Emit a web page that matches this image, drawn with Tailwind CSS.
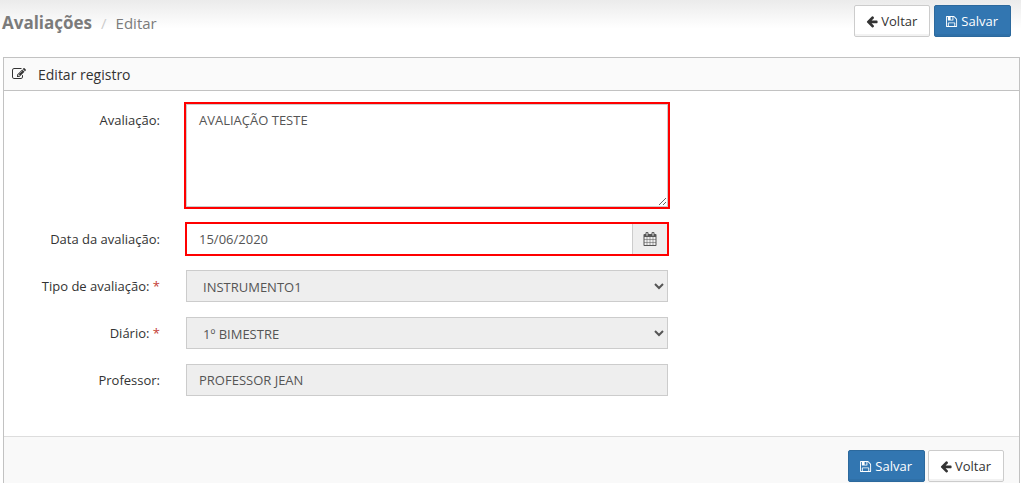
<!DOCTYPE html>
<html lang="pt-BR">
<head>
    <meta charset="UTF-8">
    <meta name="viewport" content="width=device-width, initial-scale=1.0">
    <title>Avaliações - Editar</title>
    <script src="https://cdn.jsdelivr.net/npm/@tailwindcss/browser@4"></script>
</head>
<body class="bg-white font-['Open_Sans',sans-serif] text-[13px] leading-5 text-[#333] overflow-hidden">
    <!-- Icons -->
    <svg class="hidden">
        <symbol id="icon-arrow-left" viewBox="128 0 1536 1792"><path d="M1664 896v128q0 53-32.5 90.5t-84.5 37.5h-704l293 294q38 36 38 90t-38 90l-75 76q-37 37-90 37-52 0-91-37l-651-652q-37-37-37-90 0-52 37-91l651-650q38-38 91-38 52 0 90 38l75 74q38 38 38 91t-38 91l-293 293h704q52 0 84.5 37.5t32.5 90.5z"/></symbol>
        <symbol id="icon-save" viewBox="128 0 1664 1792"><path d="M512 1536h768v-384h-768v384zm896 0h128v-896q0-14-10-38.5t-20-34.5l-281-281q-10-10-34-20t-39-10v416q0 40-28 68t-68 28h-576q-40 0-68-28t-28-68v-416h-128v1280h128v-416q0-40 28-68t68-28h832q40 0 68 28t28 68v416zm-384-928v-320q0-13-9.5-22.5t-22.5-9.5h-192q-13 0-22.5 9.5t-9.5 22.5v320q0 13 9.5 22.5t22.5 9.5h192q13 0 22.5-9.5t9.5-22.5zm640 32v928q0 40-28 68t-68 28h-1344q-40 0-68-28t-28-68v-1344q0-40 28-68t68-28h928q40 0 88 20t76 48l280 280q28 28 48 76t20 88z"/></symbol>
        <symbol id="icon-edit" viewBox="0 0 1792 1792"><path d="M888 1184l116-116-152-152-116 116v56h96v96h56zm440-720q-16-16-33 1l-350 350q-17 17-1 33t33-1l350-350q17-17 1-33zm80 594v190q0 119-84.5 203.5t-203.5 84.5h-832q-119 0-203.5-84.5t-84.5-203.5v-832q0-119 84.5-203.5t203.5-84.5h832q63 0 117 25 15 7 18 23 3 17-9 29l-49 49q-14 14-32 8-23-6-45-6h-832q-66 0-113 47t-47 113v832q0 66 47 113t113 47h832q66 0 113-47t47-113v-126q0-13 9-22l64-64q15-15 35-7t20 29zm-96-738l288 288-672 672h-288v-288zm444 132l-92 92-288-288 92-92q28-28 68-28t68 28l152 152q28 28 28 68t-28 68z"/></symbol>
        <symbol id="icon-calendar" viewBox="0 0 1792 1792"><path d="M192 1664h288v-288h-288v288zm352 0h320v-288h-320v288zm-352-352h288v-320h-288v320zm352 0h320v-320h-320v320zm-352-384h288v-288h-288v288zm736 736h320v-288h-320v288zm-384-736h320v-288h-320v288zm768 736h288v-288h-288v288zm-384-352h320v-320h-320v320zm-352-864v-288q0-13-9.5-22.5t-22.5-9.5h-64q-13 0-22.5 9.5t-9.5 22.5v288q0 13 9.5 22.5t22.5 9.5h64q13 0 22.5-9.5t9.5-22.5zm736 864h288v-320h-288v320zm-384-384h320v-288h-320v288zm384 0h288v-288h-288v288zm32-480v-288q0-13-9.5-22.5t-22.5-9.5h-64q-13 0-22.5 9.5t-9.5 22.5v288q0 13 9.5 22.5t22.5 9.5h64q13 0 22.5-9.5t9.5-22.5zm384-64v1280q0 52-38 90t-90 38h-1408q-52 0-90-38t-38-90v-1280q0-52 38-90t90-38h128v-96q0-66 47-113t113-47h64q66 0 113 47t47 113v96h384v-96q0-66 47-113t113-47h64q66 0 113 47t47 113v96h128q52 0 90 38t38 90z"/></symbol>
    </svg>

    <!-- Page header -->
    <header class="flex items-start justify-between bg-linear-to-b from-[#ebebeb] to-white to-50% h-[57px] pt-[5px] pl-0.5 pr-2.5">
        <h1 class="flex items-center pt-1 text-[#7b7b7b]">
            <span class="text-[17px] leading-7 font-bold">Avaliações</span>
            <span class="px-[9px] text-[15px] text-[#ccc]">/</span>
            <span class="text-[15px]">Editar</span>
        </h1>
        <div class="flex gap-1">
            <button type="button" class="flex items-center gap-[3px] h-8 pl-[11px] pr-3 rounded-xs border border-[#ccc] bg-white shadow-[inset_0_-2px_0_rgba(0,0,0,0.05)] hover:bg-gray-100">
                <svg class="w-3 h-[13px]" fill="currentColor"><use href="#icon-arrow-left"/></svg>
                Voltar
            </button>
            <button type="submit" form="edit-form" class="flex items-center gap-[3px] h-8 pl-[11px] pr-3 rounded-xs border border-[#2c699d] bg-[#3276b1] text-white shadow-[inset_0_-2px_0_rgba(0,0,0,0.05)] hover:bg-[#2a6395]">
                <svg class="w-3 h-[13px]" fill="currentColor"><use href="#icon-save"/></svg>
                Salvar
            </button>
        </div>
    </header>

    <!-- Form panel -->
    <form id="edit-form" class="ml-[3px] mr-px border border-[#c2c2c2]">
        <div class="flex items-center gap-3 h-[33px] pl-2 border-b border-[#c2c2c2] bg-[#fafafa]">
            <svg class="size-[14px]" fill="currentColor"><use href="#icon-edit"/></svg>
            <h2 class="pt-px text-sm">Editar registro</h2>
        </div>

        <div class="flex flex-col gap-[15px] pt-[13px] pb-10">
            <div class="grid grid-cols-[156px_482fr_325fr] gap-x-[26px] pb-px">
                <label for="avaliacao" class="pt-1.5 text-right">Avaliação:</label>
                <textarea id="avaliacao" class="block h-[103px] px-3 py-[5px] border border-[#ccc] outline-2 outline-[#f00] text-[#555] resize">AVALIAÇÃO TESTE</textarea>
            </div>
            <div class="grid grid-cols-[156px_482fr_325fr] gap-x-[26px]">
                <label for="data" class="pt-1.5 text-right">Data da avaliação:</label>
                <div class="flex h-8 border border-[#ccc] outline-2 -outline-offset-1 outline-[#f00]">
                    <input id="data" type="text" value="15/06/2020" class="grow min-w-0 px-3 text-[#555] outline-none">
                    <button type="button" aria-label="Abrir calendário" class="flex items-center justify-center w-[35px] border-l border-[#ccc] bg-[#eee] text-[#555]">
                        <svg class="size-[14px]" fill="currentColor"><use href="#icon-calendar"/></svg>
                    </button>
                </div>
            </div>
            <div class="grid grid-cols-[156px_482fr_325fr] gap-x-[26px]">
                <label for="tipo" class="pt-1.5 text-right">Tipo de avaliação: <span class="text-[#c43c35]">*</span></label>
                <select id="tipo" disabled class="h-8 px-3 pt-0.5 border border-[#ccc] bg-[#eee] text-[#555] opacity-100">
                    <option>INSTRUMENTO1</option>
                </select>
            </div>
            <div class="grid grid-cols-[156px_482fr_325fr] gap-x-[26px]">
                <label for="diario" class="pt-1.5 text-right">Diário: <span class="text-[#c43c35]">*</span></label>
                <select id="diario" disabled class="h-8 px-3 pt-0.5 border border-[#ccc] bg-[#eee] text-[#555] opacity-100">
                    <option>1º BIMESTRE</option>
                </select>
            </div>
            <div class="grid grid-cols-[156px_482fr_325fr] gap-x-[26px]">
                <label for="professor" class="pt-1.5 text-right">Professor:</label>
                <input id="professor" type="text" value="PROFESSOR JEAN" disabled class="h-8 px-3 border border-[#ccc] bg-[#eee] text-[#555]">
            </div>
        </div>

        <!-- Actions -->
        <div class="flex justify-end gap-[3px] pl-3.5 pr-[15px] py-[13px] border-t border-[#ddd] bg-[#f9f9f9]">
            <button type="submit" class="flex items-center gap-[3px] h-8 pl-[11px] pr-3 rounded-xs border border-[#2c699d] bg-[#3276b1] text-white shadow-[inset_0_-2px_0_rgba(0,0,0,0.05)] hover:bg-[#2a6395]">
                <svg class="w-3 h-[13px]" fill="currentColor"><use href="#icon-save"/></svg>
                Salvar
            </button>
            <button type="button" class="flex items-center gap-[3px] h-8 pl-[11px] pr-3 rounded-xs border border-[#ccc] bg-white shadow-[inset_0_-2px_0_rgba(0,0,0,0.05)] hover:bg-gray-100">
                <svg class="w-3 h-[13px]" fill="currentColor"><use href="#icon-arrow-left"/></svg>
                Voltar
            </button>
        </div>
    </form>
</body>
</html>
